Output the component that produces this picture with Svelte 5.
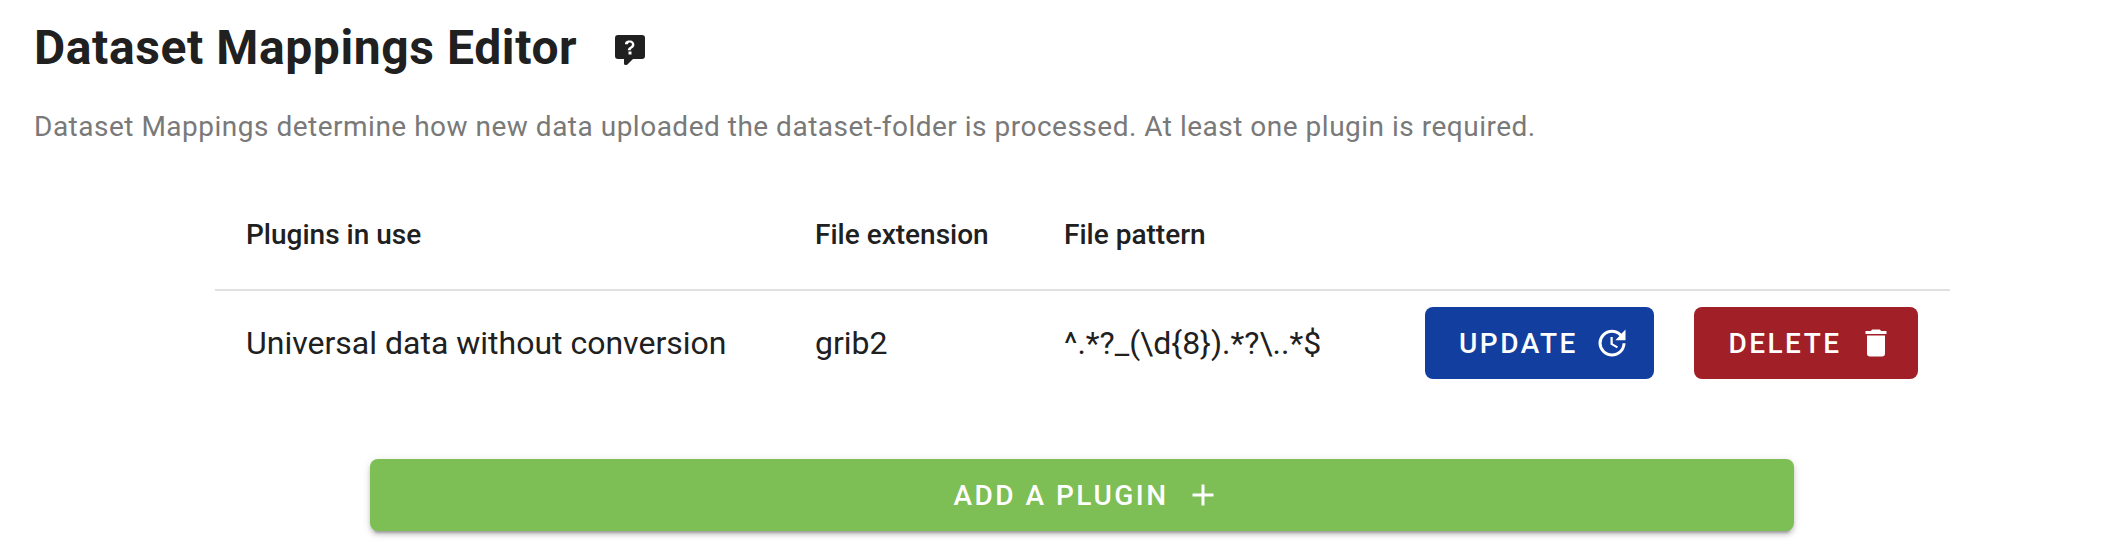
<script>
  const rows = [{ name: 'Universal data without conversion', ext: 'grib2', pattern: '^.*?_(\\d{8}).*?\\..*$' }];
</script>

<main>
  <header>
    <h1>Dataset Mappings Editor</h1>
    <svg class="help" viewBox="0 0 24 24"><path d="M4 2h16a2 2 0 0 1 2 2v12a2 2 0 0 1-2 2h-6l-3.700 3.700c-.2.200-.45.300-.8.300H9a1 1 0 0 1-1-1v-3H4a2 2 0 0 1-2-2V4a2 2 0 0 1 2-2m8.190 3.500c-1.110 0-2 .22-2.630.640-.65.430-.96 1.140-.9 1.980h1.960c0-.34.140-.61.370-.78.260-.18.560-.27.950-.27.410 0 .740.110.970.330.240.220.350.500.350.860s-.1.670-.29.950c-.21.290-.46.520-.78.680-.63.390-1.060.740-1.300 1.040-.25.290-.39.700-.39 1.270h2c0-.32.050-.58.140-.77.100-.19.270-.36.550-.51.500-.22.900-.54 1.230-.96.320-.44.480-.88.480-1.370 0-.95-.34-1.700-1-2.260-.64-.55-1.560-.83-2.710-.83M11 13v2h2v-2z"/></svg>
  </header>
  <p>Dataset Mappings determine how new data uploaded the dataset-folder is processed. At least one plugin is required.</p>
  <table>
    <thead><tr><th class="c1">Plugins in use</th><th class="c2">File extension</th><th class="c3">File pattern</th><th></th></tr></thead>
    <tbody>
      {#each rows as row}
        <tr>
          <td>{row.name}</td><td>{row.ext}</td><td>{row.pattern}</td>
          <td class="actions"><div>
            <button class="update">Update<svg viewBox="0 0 24 24"><path d="M21 10.120h-6.780l2.740-2.820c-2.730-2.700-7.150-2.800-9.880-.1a6.875 6.875 0 0 0 0 9.790c2.730 2.700 7.150 2.700 9.880 0 1.360-1.350 2.040-2.920 2.040-4.890h2c0 1.970-.88 4.540-2.640 6.290-3.510 3.480-9.210 3.480-12.720 0-3.500-3.470-3.530-9.110-.02-12.580a8.987 8.987 0 0 1 12.650 0L21 3zM12.500 8v4.250l3.500 2.080-.72 1.210L11 13V8z"/></svg></button>
            <button class="delete">Delete<svg viewBox="0 0 24 24"><path d="M19 4h-3.500l-1-1h-5l-1 1H5v2h14M6 19a2 2 0 0 0 2 2h8a2 2 0 0 0 2-2V7H6z"/></svg></button>
          </div></td>
        </tr>
      {/each}
    </tbody>
  </table>
  <button class="add">Add a plugin<svg viewBox="0 0 24 24"><path d="M19 13h-6v6h-2v-6H5v-2h6V5h2v6h6z"/></svg></button>
</main>

<style>
  :global(body) { background: #fff; overflow: hidden; }
  main { height: 548px; box-sizing: border-box; padding-top: 15px; font-family: Roboto, sans-serif; color: #202020; }
  header { display: flex; align-items: center; gap: 35px; height: 64px; padding-left: 34px; }
  h1 { margin: 0; font-size: 48px; font-weight: 700; letter-spacing: .6px; white-space: nowrap; }
  svg { fill: currentColor; flex: none; }
  .help { width: 36px; height: 36px; margin-top: 6px; }
  p { margin: 28px 0 0 34px; height: 40px; line-height: 40px; font-size: 28px; letter-spacing: .5px; color: #797979; white-space: nowrap; }
  table { width: 1735px; margin: 32px 0 0 215px; border-collapse: separate; border-spacing: 0; table-layout: fixed; }
  th { height: 112px; padding: 0 0 0 31px; box-sizing: border-box; text-align: left; font-size: 28px; font-weight: 500; border-bottom: 2px solid #e0e0e0; }
  td { height: 104px; padding: 0 0 0 31px; box-sizing: border-box; font-size: 32px; white-space: nowrap; }
  .c1 { width: 569px; } .c2 { width: 249px; } .c3 { width: 361px; }
  .actions div { display: flex; gap: 40px; }
  button { display: flex; align-items: center; justify-content: center; border: 0; border-radius: 8px; height: 72px; box-sizing: border-box; padding: 0 0 0 10px; font: 500 28px Roboto, sans-serif; letter-spacing: 2.500px; text-transform: uppercase; color: #fff; gap: 16px; }
  button svg { width: 36px; height: 36px; }
  .update { width: 229px; background: #123ea0; }
  .delete { width: 224px; background: #a12027; }
  .add { width: 1424px; margin: 64px 0 0 370px; background: #7dbe55; box-shadow: 0 6px 2px -4px #0003, 0 4px 4px #00000024, 0 2px 10px #0000001f; }
</style>
